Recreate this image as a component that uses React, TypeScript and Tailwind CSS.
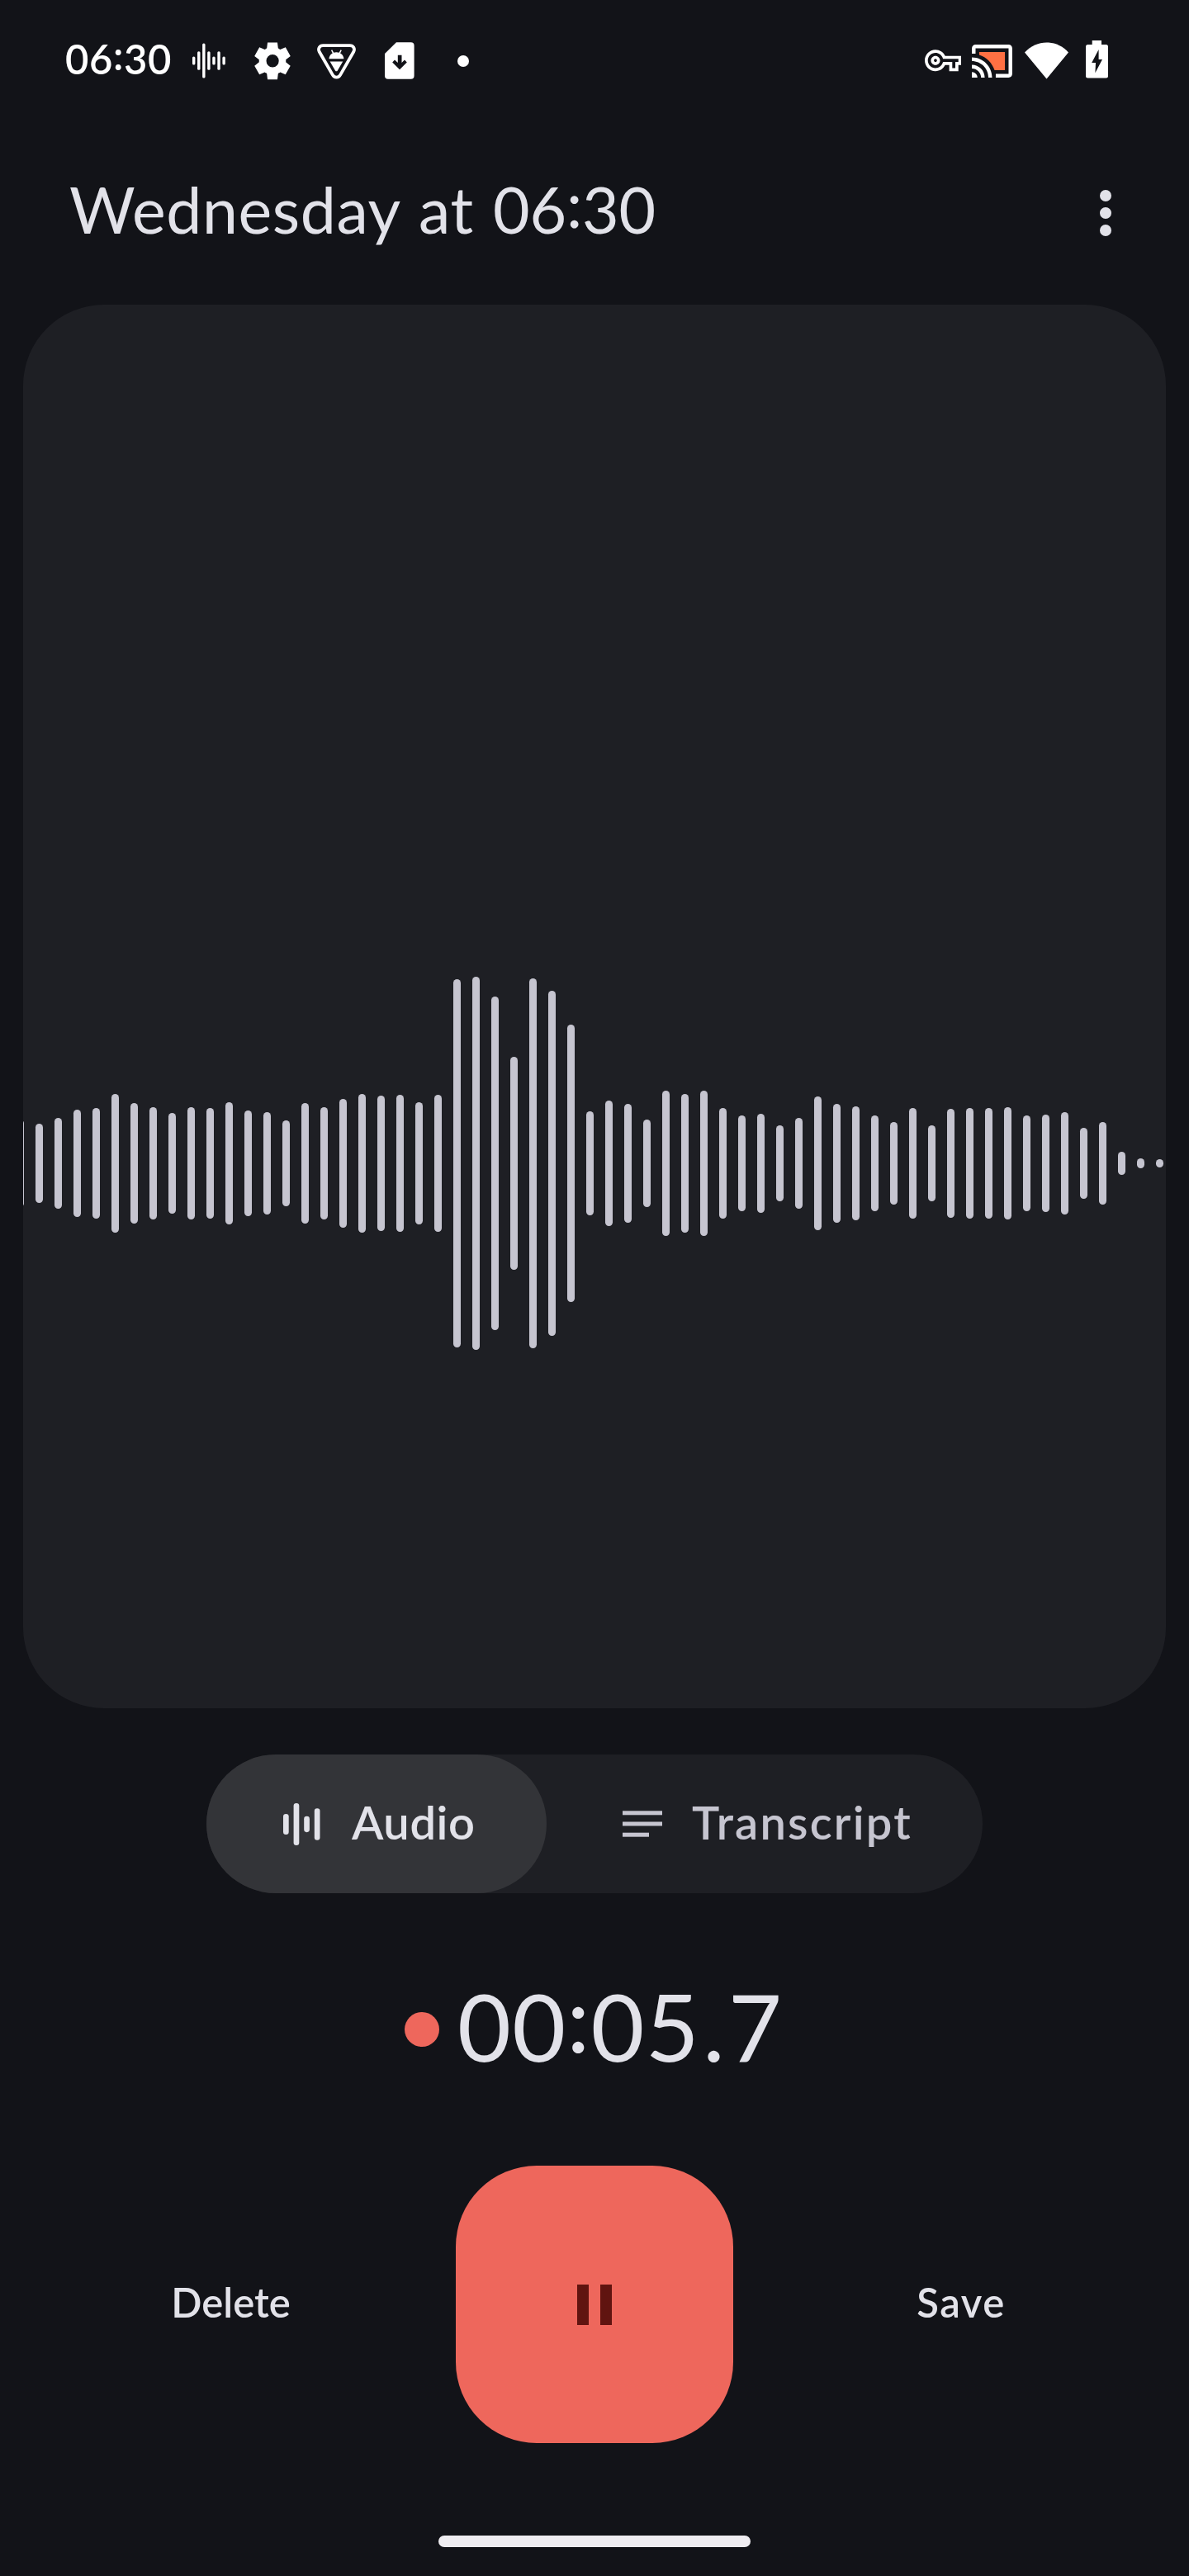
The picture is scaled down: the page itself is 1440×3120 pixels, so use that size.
import React from "react";

const BAR_HEIGHTS = [
  106, 96, 110, 130, 134, 168, 146, 136, 122, 136, 134, 148, 128, 124, 104, 146, 136, 156, 168, 164,
  166, 148, 166, 446, 452, 404, 258, 448, 418, 336, 126, 152, 144, 106, 176, 168, 176, 134, 116, 120,
  92, 110, 162, 144, 138, 116, 100, 134, 92, 132, 134, 134, 136, 116, 118, 124, 86, 100, 28, 12, 10,
];

function VoiceWaveIcon() {
  const bars = [10, 22.5, 42, 22.5, 10, 22.5, 10];
  return (
    <svg className="h-[43px] w-[40px]" viewBox="0 0 40 43" fill="#fff">
      {bars.map((h, i) => (
        <rect key={i} x={i * 6.07} y={21.5 - h / 2} width={3.4} height={h} rx={1.6} />
      ))}
    </svg>
  );
}

function GearIcon() {
  return (
    <svg className="h-[53.6px] w-[52px]" viewBox="0 0 24 24" preserveAspectRatio="none" fill="#fff">
      <path d="m9.25 22-.4-3.2q-.325-.125-.612-.3-.288-.175-.563-.375L4.7 19.375l-2.75-4.75 2.575-1.95Q4.5 12.5 4.5 12.337v-.675q0-.162.025-.337L1.95 9.375l2.75-4.75 2.975 1.25q.275-.2.575-.375.3-.175.6-.3l.4-3.2h5.5l.4 3.2q.325.125.613.3.287.175.562.375l2.975-1.25 2.75 4.75-2.575 1.95q.025.175.025.337v.675q0 .163-.05.338l2.575 1.95-2.75 4.75-2.95-1.25q-.275.2-.575.375-.3.175-.6.3l-.4 3.2Zm2.8-6.5q1.45 0 2.475-1.025Q15.55 13.45 15.55 12q0-1.45-1.025-2.475Q13.5 8.5 12.05 8.5q-1.475 0-2.488 1.025Q8.55 10.55 8.55 12q0 1.45 1.012 2.475Q10.575 15.5 12.05 15.5Z" />
    </svg>
  );
}

function BugTriangleIcon() {
  return (
    <svg className="h-[43px] w-[47px]" viewBox="0 0 47 43">
      <path
        d="M7.2 2.1H39.8C44 2.1 46.2 6 44.2 9.8L28.2 37.6C26 41.6 21 41.6 18.8 37.6L2.8 9.8C.8 6 3 2.1 7.2 2.1Z"
        fill="none"
        stroke="#fff"
        strokeWidth="3.8"
      />
      <path d="M14.4 18.2C14.8 13.4 18.6 10.3 23.4 10.3S32 13.4 32.4 18.2Z" fill="#fff" />
      <path d="M17.6 7.6 19.6 11.4M29.2 7.6 27.2 11.4" stroke="#fff" strokeWidth="1.5" />
      <path d="M15.6 21.4H31.2L24.8 32.4C24.1 33.6 22.7 33.6 22 32.4Z" fill="#fff" />
    </svg>
  );
}

function SdCardIcon() {
  return (
    <svg className="h-[45px] w-[36px]" viewBox="0 0 36 45">
      <path
        fill="#fff"
        fillRule="evenodd"
        d="M14 .2H31.6A4 4 0 0 1 35.6 4.2V40.8A4 4 0 0 1 31.6 44.8H4A4 4 0 0 1 0 40.8V14ZM15.8 15.8V25L12 21.6 9.2 24.4 18 33.2 26.8 24.4 24 21.6 20.5 25V15.8Z"
      />
    </svg>
  );
}

function KeyIcon() {
  return (
    <svg className="size-[44.4px]" viewBox="0 0 24 24" fill="#fff">
      <path d="M22 19h-6v-4h-2.68c-1.14 2.42-3.6 4-6.32 4-3.86 0-7-3.14-7-7s3.14-7 7-7c2.72 0 5.17 1.58 6.32 4H24v6h-2v4zm-4-2h2v-4h2v-2H11.94l-.23-.67C11.01 8.34 9.11 7 7 7c-2.76 0-5 2.24-5 5s2.24 5 5 5c2.11 0 4.01-1.34 4.71-3.33l.23-.67H18v4zM7 15c-1.65 0-3-1.35-3-3s1.35-3 3-3 3 1.35 3 3-1.35 3-3 3zm0-4c-.55 0-1 .45-1 1s.45 1 1 1 1-.45 1-1-.45-1-1-1z" />
    </svg>
  );
}

function CastIcon() {
  return (
    <svg className="h-[40px] w-[49px]" viewBox="1 3 22 18" fill="#fff">
      <path d="M1 18v3h3c0-1.66-1.34-3-3-3zm0-4v2c2.76 0 5 2.24 5 5h2c0-3.87-3.13-7-7-7zM1 10v2c4.97 0 9 4.03 9 9h2c0-6.08-4.93-11-11-11zm20-7H3c-1.1 0-2 .9-2 2v3h2V5h18v14h-7v2h7c1.1 0 2-.9 2-2V5c0-1.1-.9-2-2-2z" />
      <path fill="#ff7043" d="M19 7H5v1.63c3.96 1.28 7.09 4.41 8.37 8.37H19V7z" />
    </svg>
  );
}

function WifiIcon() {
  return (
    <svg className="h-[45px] w-[53px]" viewBox="0 0 53 45" fill="#fff">
      <path d="M26.5 44.6 0 12.4C7.4 4.4 16.8.4 26.5.4S45.6 4.4 53 12.4Z" />
    </svg>
  );
}

function BatteryIcon() {
  return (
    <svg className="h-[46px] w-[27px]" viewBox="0 0 27 46" fill="#fff">
      <path
        fillRule="evenodd"
        d="M7.7 0H19V5H24.5A2.5 2.5 0 0 1 27 7.5V43A2.5 2.5 0 0 1 24.5 45.5H2.5A2.5 2.5 0 0 1 0 43V7.5A2.5 2.5 0 0 1 2.5 5H7.7ZM15.6 11 7.2 27H12L11.4 39.3 20 23H15.6Z"
      />
    </svg>
  );
}

/* Colon lifted to the vertical middle of the digits. */
function Colon() {
  return <span className="relative -top-[0.09em]">:</span>;
}

function StatusBar() {
  return (
    <div className="flex h-[147px] items-center pl-[79px] pr-[98px]">
      <span className="w-[154px] pb-[5px] text-[49px] font-semibold leading-none tracking-[0.6px] text-white">
        06<Colon />30
      </span>
      <VoiceWaveIcon />
      <div className="ml-[31px]"><GearIcon /></div>
      <div className="ml-[28px] mt-[2px]"><BugTriangleIcon /></div>
      <div className="ml-[35px]"><SdCardIcon /></div>
      <div className="ml-[52px] size-[14px] rounded-full bg-white" />
      <div className="flex-1" />
      <KeyIcon />
      <div className="ml-[13px]"><CastIcon /></div>
      <div className="ml-[15px] mb-[1px]"><WifiIcon /></div>
      <div className="ml-[21px] mb-[3px]"><BatteryIcon /></div>
    </div>
  );
}

function Waveform() {
  return (
    <svg className="mt-[814px] h-[452px] w-full" viewBox="28 0 1384 452" fill="#c6c5d0">
      {BAR_HEIGHTS.map((h, i) => (
        <rect key={i} x={20 + i * 23} y={226 - h / 2} width={9} height={h} rx={4.5} />
      ))}
    </svg>
  );
}

function AudioIcon() {
  const bars = [25, 51, 19.3, 38.4];
  return (
    <svg className="h-[51px] w-[45px]" viewBox="0 0 45 51" fill="#e2e2e9">
      {bars.map((h, i) => (
        <rect key={i} x={i * 12.6} y={25.5 - h / 2} width={6.7} height={h} rx={3.3} />
      ))}
    </svg>
  );
}

function TranscriptIcon() {
  return (
    <svg className="h-[32px] w-[48px]" viewBox="0 0 48 32" fill="#c6c5d0">
      <rect y="0.3" width="48" height="5" />
      <rect y="13.5" width="48" height="5" />
      <rect y="26.7" width="32" height="5" />
    </svg>
  );
}

export default function App() {
  return (
    <div className="flex h-[3120px] w-[1440px] flex-col overflow-hidden bg-[#121318] font-['Lato',sans-serif] text-[#e2e2e9]">
      <StatusBar />
      <header className="flex h-[221px] items-center justify-between pl-[84px] pr-[94px]">
        <h1 className="whitespace-nowrap pb-[9px] text-[77px] leading-none tracking-[0.6px] [word-spacing:3px]">
          Wednesday at <span className="tracking-[-0.2px]">06<Colon />30</span>
        </h1>
        <button className="flex flex-col gap-[7px]" aria-label="More options">
          <span className="size-[14px] rounded-full bg-[#e2e2e9]" />
          <span className="size-[14px] rounded-full bg-[#e2e2e9]" />
          <span className="size-[14px] rounded-full bg-[#e2e2e9]" />
        </button>
      </header>

      <main className="mx-[28px] mt-px h-[1700px] shrink-0 overflow-hidden rounded-[98px] bg-[#1e1f24]">
        <Waveform />
      </main>

      <div className="mx-[250px] mt-[56px] flex h-[168px] shrink-0 rounded-full bg-[#1e1f24]">
        <button className="flex w-[412px] items-center rounded-full bg-[#333438] pl-[93px]">
          <AudioIcon />
          <span className="ml-[38px] pb-[5px] text-[56px] font-semibold leading-none tracking-[0.6px]">Audio</span>
        </button>
        <button className="flex flex-1 items-center pl-[92px] text-[#c6c5d0]">
          <TranscriptIcon />
          <span className="ml-[36px] pb-[5px] text-[56px] font-semibold leading-none tracking-[2.2px]">Transcript</span>
        </button>
      </div>

      <div className="mt-[95px] flex h-[140px] shrink-0 items-center pl-[490px]">
        <span className="size-[42px] rounded-full bg-[#ee675c]" />
        <span className="ml-[22px] pb-[9px] text-[112px] leading-none tracking-[1.2px]">
          00<Colon />0<span className="tracking-[4.5px]">5.</span>7
        </span>
      </div>

      <div className="mt-[95px] flex h-[336px] shrink-0 items-center">
        <button className="w-[552px] pb-[6px] pl-[7px] text-center text-[49px] font-semibold leading-none">Delete</button>
        <button className="flex size-[336px] items-center justify-center gap-[14px] rounded-[98px] bg-[#ee675c]" aria-label="Pause">
          <span className="h-[49px] w-[14px] bg-[#601410]" />
          <span className="h-[49px] w-[14px] bg-[#601410]" />
        </button>
        <button className="w-[552px] pb-[6px] text-center text-[49px] font-semibold leading-none tracking-[1.5px]">Save</button>
      </div>

      <div className="mx-auto mt-[112px] h-[14px] w-[378px] rounded-full bg-[#efedf1]" />
    </div>
  );
}
